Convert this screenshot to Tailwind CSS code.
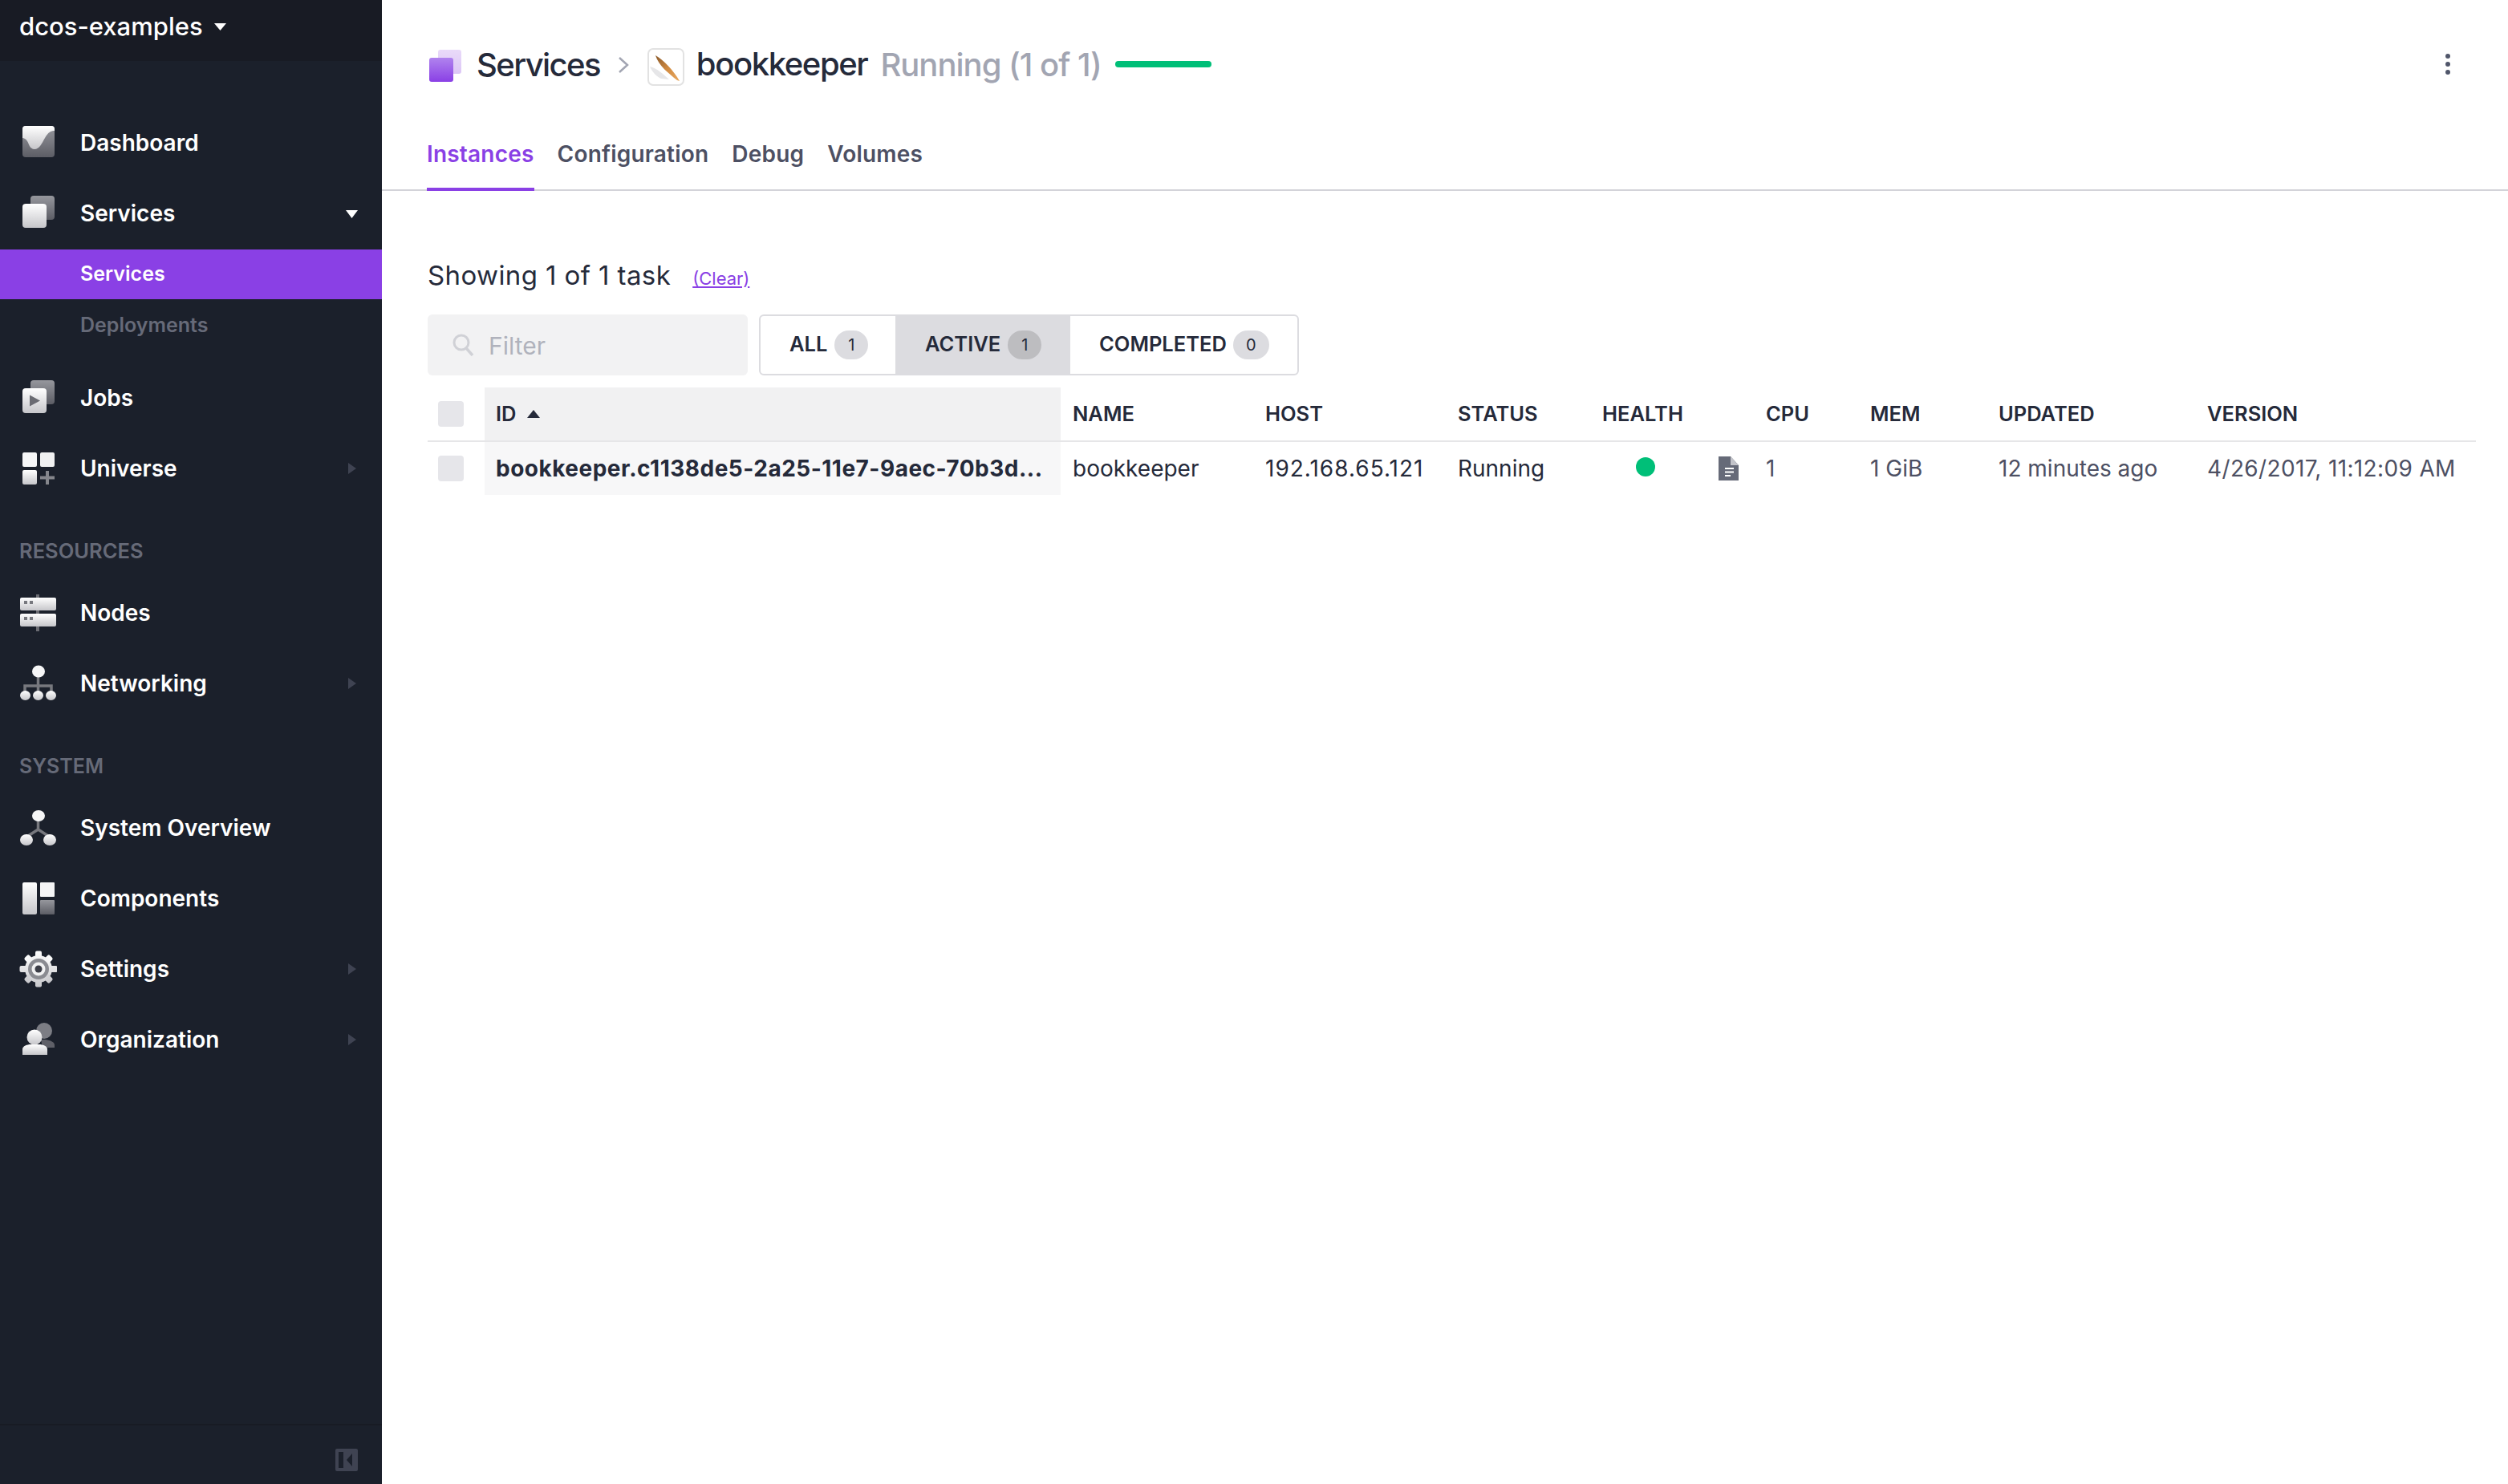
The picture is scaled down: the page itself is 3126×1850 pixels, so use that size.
<!DOCTYPE html>
<html lang="en">
<head>
<meta charset="utf-8">
<title>bookkeeper</title>
<script src="https://cdn.jsdelivr.net/npm/@tailwindcss/browser@4"></script>
</head>
<body class="m-0 bg-white font-['Inter',sans-serif] text-[#252a3a] overflow-hidden">
<svg class="absolute w-0 h-0" aria-hidden="true"><defs>
<linearGradient id="lt" x1="0" y1="0" x2="0" y2="1"><stop offset="0" stop-color="#ffffff"/><stop offset="1" stop-color="#c6c6ca"/></linearGradient>
<linearGradient id="lu" gradientUnits="userSpaceOnUse" x1="0" y1="0" x2="0" y2="48"><stop offset="0" stop-color="#ffffff"/><stop offset="1" stop-color="#c6c6ca"/></linearGradient>
<linearGradient id="dk" x1="0" y1="0" x2="0" y2="1"><stop offset="0" stop-color="#96979d"/><stop offset="1" stop-color="#5c5d65"/></linearGradient>
<linearGradient id="pu" x1="0" y1="0" x2="0" y2="1"><stop offset="0" stop-color="#b083ee"/><stop offset="1" stop-color="#8a40e5"/></linearGradient>
<linearGradient id="pl" x1="0" y1="0" x2="0" y2="1"><stop offset="0" stop-color="#e9daf9"/><stop offset="1" stop-color="#dcc6f6"/></linearGradient>
<linearGradient id="qu" x1="0" y1="0" x2="1" y2="1"><stop offset="0" stop-color="#8a5a2c"/><stop offset="0.5" stop-color="#d08a40"/><stop offset="1" stop-color="#e8a860"/></linearGradient>
</defs></svg>
<div class="flex w-[3126px] h-[1850px]">
  <aside class="w-[476px] shrink-0 h-full bg-[#1b202b] flex flex-col text-white">
    <div class="h-[76px] bg-[#181b24] shrink-0 flex items-start pl-[24px] pt-[12px]">
      <span class="text-[31px] leading-[42px] font-medium">dcos-examples</span>
      <svg class="ml-[14px] mt-[17px]" width="15" height="9" viewBox="0 0 15 9"><path d="M0 0H15L7.500 9Z" fill="#fff"/></svg>
    </div>
    <nav class="flex-1 pt-[58px] text-[28px] font-semibold">
      <div class="h-[88px] flex items-center pl-[23px] gap-[29px]">
        <svg class="w-[48px] h-[48px]" viewBox="0 0 48 48"><rect x="5" y="3" width="40" height="39" rx="4" fill="url(#dk)"/><path d="M5 7a4 4 0 0 1 4-4h32a4 4 0 0 1 4 4v2c-5 0-8 2-12 9s-7 14-13 14-7-7-9-10-4-4-6-4Z" fill="url(#lt)"/></svg>
        <span>Dashboard</span>
      </div>
      <div class="h-[88px] flex items-center pl-[23px] gap-[29px] relative">
        <svg class="w-[48px] h-[48px]" viewBox="0 0 48 48"><rect x="15" y="2" width="30" height="30" rx="4" fill="url(#dk)"/><rect x="5" y="12" width="30" height="30" rx="4" fill="url(#lt)"/></svg>
        <span>Services</span>
        <svg class="absolute left-[431px] top-[40px]" width="15" height="10" viewBox="0 0 15 10"><path d="M0 0H15L7.500 10Z" fill="#fff"/></svg>
      </div>
      <div class="mt-[1px] pb-[15px] text-[25px]">
        <div class="h-[62px] bg-[#8a40e5] flex items-center pl-[100px]">Services</div>
        <div class="h-[64px] flex items-center pl-[100px] pt-[1px] text-[#666a78]">Deployments</div>
      </div>
      <div class="h-[88px] flex items-center pl-[23px] gap-[29px]">
        <svg class="w-[48px] h-[48px]" viewBox="0 0 48 48"><rect x="15" y="2" width="30" height="30" rx="4" fill="url(#dk)"/><rect x="5" y="12" width="30" height="31" rx="4" fill="url(#lt)"/><path d="M14 20.500 27 27.500 14 34.500Z" fill="#6a6b72"/></svg>
        <span>Jobs</span>
      </div>
      <div class="h-[88px] flex items-center pl-[23px] gap-[29px] relative">
        <svg class="w-[48px] h-[48px]" viewBox="0 0 48 48"><rect x="5" y="4" width="18" height="18" rx="2" fill="#f6f6f7"/><rect x="27" y="4" width="18" height="18" rx="2" fill="#f0f0f1"/><rect x="5" y="26" width="18" height="18" rx="2" fill="url(#lt)"/><path d="M34 27h4v6.500h7v4h-7V44h-4v-6.500h-7v-4h7Z" fill="#85868c"/></svg>
        <span>Universe</span>
        <svg class="absolute left-[434px] top-[37px]" width="10" height="14" viewBox="0 0 10 14"><path d="M0 0L10 7L0 14Z" fill="#3f4352"/></svg>
      </div>
      <div class="h-[92px] pt-[47px] pl-[24px] text-[25.500px] leading-[24px] text-[#666a78]">RESOURCES</div>
      <div class="h-[88px] flex items-center pl-[23px] gap-[29px]">
        <svg class="w-[48px] h-[48px]" viewBox="0 0 48 48"><rect x="22" y="1" width="4" height="46" fill="#6a6b72"/><rect x="2" y="5" width="45" height="16" rx="2" fill="url(#lt)"/><rect x="2" y="25" width="45" height="16" rx="2" fill="url(#lt)"/><rect x="7" y="9" width="4" height="4" fill="#77787e"/><rect x="14" y="9" width="4" height="4" fill="#77787e"/><rect x="7" y="29" width="4" height="4" fill="#77787e"/><rect x="14" y="29" width="4" height="4" fill="#77787e"/></svg>
        <span>Nodes</span>
      </div>
      <div class="h-[88px] flex items-center pl-[23px] gap-[29px] relative">
        <svg class="w-[48px] h-[48px]" viewBox="0 0 48 48"><path d="M24.500 10V36M8 36V27H41V36" fill="none" stroke="#77787e" stroke-width="3.500"/><ellipse cx="25" cy="9" rx="8" ry="7.500" fill="#f6f6f7"/><ellipse cx="8.500" cy="39" rx="6.500" ry="6" fill="url(#lt)"/><ellipse cx="24.500" cy="39" rx="6.500" ry="6" fill="url(#lt)"/><ellipse cx="40.500" cy="39" rx="6.500" ry="6" fill="url(#lt)"/></svg>
        <span>Networking</span>
        <svg class="absolute left-[434px] top-[37px]" width="10" height="14" viewBox="0 0 10 14"><path d="M0 0L10 7L0 14Z" fill="#3f4352"/></svg>
      </div>
      <div class="h-[92px] pt-[47px] pl-[24px] text-[25px] leading-[24px] text-[#666a78]">SYSTEM</div>
      <div class="h-[88px] flex items-center pl-[23px] gap-[29px]">
        <svg class="w-[48px] h-[48px]" viewBox="0 0 48 48"><path d="M24.500 12V26L9 36M24.500 26L40 36" fill="none" stroke="#77787e" stroke-width="3.500"/><ellipse cx="25" cy="9" rx="8" ry="7" fill="#f6f6f7"/><ellipse cx="10" cy="39" rx="8" ry="7" fill="url(#lt)"/><ellipse cx="39" cy="39" rx="8" ry="7" fill="url(#lt)"/></svg>
        <span>System Overview</span>
      </div>
      <div class="h-[88px] flex items-center pl-[23px] gap-[29px]">
        <svg class="w-[48px] h-[48px]" viewBox="0 0 48 48"><rect x="5" y="4" width="18" height="40" rx="2" fill="url(#lt)"/><rect x="27" y="4" width="18" height="18" rx="1" fill="#f4f4f5"/><rect x="27" y="26" width="18" height="18" rx="1" fill="url(#dk)"/></svg>
        <span>Components</span>
      </div>
      <div class="h-[88px] flex items-center pl-[23px] gap-[29px] relative">
        <svg class="w-[48px] h-[48px]" viewBox="0 0 48 48"><g fill="url(#lu)"><circle cx="25" cy="24" r="17"/><rect x="21" y="1.500" width="8" height="45" rx="2"/><rect x="1.500" y="20" width="47" height="8" rx="2"/><rect x="21" y="2" width="8" height="44" rx="2" transform="rotate(45 25 24)"/><rect x="21" y="2" width="8" height="44" rx="2" transform="rotate(-45 25 24)"/></g><circle cx="25" cy="24" r="13" fill="#8a8b91"/><circle cx="25" cy="24" r="8.500" fill="#f1f1f2"/><circle cx="25" cy="24" r="4.500" fill="#3c3e47"/></svg>
        <span>Settings</span>
        <svg class="absolute left-[434px] top-[37px]" width="10" height="14" viewBox="0 0 10 14"><path d="M0 0L10 7L0 14Z" fill="#3f4352"/></svg>
      </div>
      <div class="h-[88px] flex items-center pl-[23px] gap-[29px] relative">
        <svg class="w-[48px] h-[48px]" viewBox="0 0 48 48"><circle cx="32" cy="13" r="10" fill="#7c7d84"/><path d="M28 24h6c6 1 11 3 11 7v3H30Z" fill="#5f6068"/><circle cx="20" cy="21" r="9.500" fill="url(#lt)"/><path d="M5 43v-7c0-4 6-6 10-6h11c4 0 10 2 10 6v7Z" fill="url(#lt)"/></svg>
        <span>Organization</span>
        <svg class="absolute left-[434px] top-[37px]" width="10" height="14" viewBox="0 0 10 14"><path d="M0 0L10 7L0 14Z" fill="#3f4352"/></svg>
      </div>
    </nav>
    <div class="h-[75px] shrink-0 border-t-2 border-[#181b24] flex justify-end pr-[30px] pt-[29px]">
      <svg width="28" height="28" viewBox="0 0 28 28"><rect width="28" height="28" rx="2" fill="#3f4352"/><rect x="4" y="4" width="6" height="20" fill="#1b202b"/><path d="M21 6V22L14 14Z" fill="#1b202b"/></svg>
    </div>
  </aside>
  <main class="flex-1 min-w-0 pt-[50px]">
    <div class="flex items-center justify-between h-[60px] pl-[56px] pr-[72px]">
      <div class="flex items-center">
        <svg class="w-[40px] h-[40px] mr-[19px] ml-[3px] mt-[4px]" viewBox="0 0 40 40"><rect x="11" y="0" width="29" height="30" rx="3" fill="url(#pl)"/><rect x="0" y="10" width="30" height="30" rx="3" fill="url(#pu)"/></svg>
        <span class="text-[40px] leading-[60px] font-medium tracking-[-1.600px] mt-[2px]">Services</span>
        <svg class="ml-[22px] mr-[23px] mt-[2px]" width="14" height="22" viewBox="0 0 14 22"><path d="M2 2L12 11L2 20" fill="none" stroke="#a2a5b2" stroke-width="2.500"/></svg>
        <svg class="mr-[15px] mt-[6px]" width="46" height="47" viewBox="0 0 46 47"><rect x="1" y="1" width="44" height="45" rx="6" fill="#fff" stroke="#e2e2e2" stroke-width="2"/><path d="M3 23C12 25 20 33 27 39L17 38C12 36 6 30 3 23Z" fill="#e6e6e8"/><path d="M10 9C20 15 32 27 40 41L37 40C27 32 14 22 10 9Z" fill="url(#qu)"/></svg>
        <span class="text-[40px] leading-[60px] font-medium tracking-[-1.400px]">bookkeeper</span>
        <span class="ml-[16px] text-[40px] leading-[60px] font-medium tracking-[-1px] text-[#a2a5b2] mt-[2px]">Running (1 of 1)</span>
        <span class="ml-[17px] w-[120px] h-[8px] rounded-full bg-[#00bf78]"></span>
      </div>
      <div class="flex flex-col gap-[4px]">
        <span class="w-[6px] h-[6px] rounded-full bg-[#50566a]"></span>
        <span class="w-[6px] h-[6px] rounded-full bg-[#50566a]"></span>
        <span class="w-[6px] h-[6px] rounded-full bg-[#50566a]"></span>
      </div>
    </div>
    <div class="mt-[48px] h-[80px] border-b-2 border-[#d3d3d9] pl-[56px] flex gap-[29px] text-[28px] font-semibold tracking-[0.2px] text-[#4d5063]">
      <div class="h-[80px] border-b-4 border-[#8a40e5] text-[#8a40e5] leading-[68px]">Instances</div>
      <div class="leading-[68px]">Configuration</div>
      <div class="leading-[68px]">Debug</div>
      <div class="leading-[68px]">Volumes</div>
    </div>
    <div class="pl-[57px] pr-[40px]">
      <div class="mt-[82px] flex items-baseline h-[46px]">
        <span class="text-[33px] leading-[46px] tracking-[0.4px]">Showing 1 of 1 task</span>
        <a class="ml-[27px] text-[22px] text-[#8a40e5] underline">(Clear)</a>
      </div>
      <div class="mt-[26px] flex gap-[14px] h-[76px]">
        <div class="w-[399px] bg-[#f2f2f3] rounded-[6px] flex items-center pl-[31px] gap-[18px] text-[30px] text-[#b0b2bc]">
          <svg width="27" height="28" viewBox="0 0 27 28"><circle cx="11" cy="11" r="9" fill="none" stroke="#d0d1d6" stroke-width="3"/><path d="M17 18L25 27" stroke="#d0d1d6" stroke-width="3.500"/></svg>
          <span class="pt-[3px]">Filter</span>
        </div>
        <div class="w-[673px] flex border-2 border-[#dcdce0] rounded-[6px] text-[25.500px] font-semibold overflow-hidden">
          <div class="w-[168px] flex items-center pl-[36px]"><span class="pb-[2px]">ALL</span><span class="ml-[9px] w-[42px] h-[36px] rounded-full bg-[#dcdce0] flex items-center justify-center text-[20px] font-normal">1</span></div>
          <div class="w-[218px] flex items-center pl-[37px] bg-[#dcdce0]"><span class="pb-[2px]">ACTIVE</span><span class="ml-[9px] w-[42px] h-[36px] rounded-full bg-[#bdbdc0] flex items-center justify-center text-[20px] font-normal">1</span></div>
          <div class="flex-1 flex items-center pl-[36px]"><span class="pb-[2px]">COMPLETED</span><span class="ml-[8px] w-[45px] h-[36px] rounded-full bg-[#dcdce0] flex items-center justify-center text-[20px] font-normal">0</span></div>
        </div>
      </div>
      <div class="mt-[15px] grid grid-cols-[71px_718px_240px_240px_180px_204px_130px_160px_260px_350px] w-[2553px]">
        <div class="h-[68px] border-b-2 border-[#e6e6e8] flex items-center pl-[13px]"><span class="w-[32px] h-[32px] rounded-[4px] bg-[#e6e6ea]"></span></div>
        <div class="h-[68px] border-b-2 border-[#e6e6e8] bg-[#f1f1f2] flex items-center pl-[14px] text-[25.500px] font-semibold">ID<svg class="ml-[13px]" width="18" height="12" viewBox="0 0 18 12"><path d="M9 1L17 11H1Z" fill="#252a3a"/></svg></div>
        <div class="h-[68px] border-b-2 border-[#e6e6e8] flex items-center pl-[15px] text-[25.500px] font-semibold">NAME</div>
        <div class="h-[68px] border-b-2 border-[#e6e6e8] flex items-center pl-[15px] text-[25.500px] font-semibold">HOST</div>
        <div class="h-[68px] border-b-2 border-[#e6e6e8] flex items-center pl-[15px] text-[25.500px] font-semibold">STATUS</div>
        <div class="h-[68px] border-b-2 border-[#e6e6e8] flex items-center pl-[15px] text-[25.500px] font-semibold">HEALTH</div>
        <div class="h-[68px] border-b-2 border-[#e6e6e8] flex items-center pl-[15px] text-[25.500px] font-semibold">CPU</div>
        <div class="h-[68px] border-b-2 border-[#e6e6e8] flex items-center pl-[15px] text-[25.500px] font-semibold">MEM</div>
        <div class="h-[68px] border-b-2 border-[#e6e6e8] flex items-center pl-[15px] text-[25.500px] font-semibold">UPDATED</div>
        <div class="h-[68px] border-b-2 border-[#e6e6e8] flex items-center pl-[15px] text-[25.500px] font-semibold">VERSION</div>

        <div class="h-[66px] flex items-center pl-[13px]"><span class="w-[32px] h-[32px] rounded-[4px] bg-[#e6e6ea]"></span></div>
        <div class="h-[66px] bg-[#f7f7f8] flex items-center pl-[14px] text-[28px] font-bold whitespace-nowrap tracking-[0.5px] min-w-0"><span>bookkeeper.c1138de5-2a25-11e7-9aec-70b3d...</span></div>
        <div class="h-[66px] flex items-center pl-[15px] text-[28px]">bookkeeper</div>
        <div class="h-[66px] flex items-center pl-[15px] text-[28px] tracking-[1px] whitespace-nowrap">192.168.65.121</div>
        <div class="h-[66px] flex items-center pl-[15px] text-[28px]">Running</div>
        <div class="h-[66px] flex items-center pl-[57px]">
          <span class="w-[24px] h-[24px] rounded-full bg-[#00bf78] -mt-[4px]"></span>
          <svg class="ml-[79px]" width="25" height="30" viewBox="0 0 25 30"><path d="M0 0H15L25 11V30H0Z" fill="#666a78"/><path d="M15 0L25 11H15Z" fill="#c3c4ca"/><path d="M8 15H19M8 19.500H19M8 24H15" stroke="#fff" stroke-width="2.200"/></svg>
        </div>
        <div class="h-[66px] flex items-center pl-[15px] text-[28px] text-[#4d5063]">1</div>
        <div class="h-[66px] flex items-center pl-[15px] text-[28px] text-[#4d5063]">1 GiB</div>
        <div class="h-[66px] flex items-center pl-[15px] text-[28px] text-[#4d5063]">12 minutes ago</div>
        <div class="h-[66px] flex items-center pl-[15px] text-[28px] text-[#4d5063] tracking-[0.35px] whitespace-nowrap">4/26/2017, 11:12:09 AM</div>
      </div>
    </div>
  </main>
</div>
</body>
</html>
